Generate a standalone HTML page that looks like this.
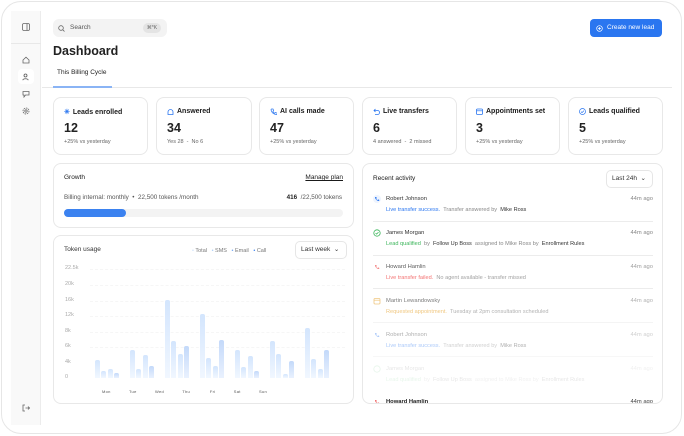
<!DOCTYPE html>
<html><head><meta charset="utf-8">
<style>
*{box-sizing:border-box;margin:0;padding:0}
body{width:684px;height:436px;background:#fff;font-family:"Liberation Sans",sans-serif;color:#1a1a1a;position:relative;overflow:hidden}
.a{position:absolute}
.frame{left:1px;top:1px;width:681px;height:433px;border:1px solid #e6e6e6;border-radius:20px;background:#fff}
.side{left:11px;top:11px;width:30px;height:414px;background:#f9f9f9;border-right:1px solid #ececec}
.card{position:absolute;border:1px solid #e8e8e8;border-radius:8px;background:#fff}
.stat .t{position:absolute;left:10px;top:10px;font-size:7px;font-weight:bold;display:flex;align-items:center;gap:3px}
.stat .v{position:absolute;left:10px;top:23px;font-size:12.5px;font-weight:bold;color:#222}
.stat .s{position:absolute;left:10px;top:41px;font-size:5.5px;color:#666}
.ic{width:7px;height:7px;display:inline-block}
.row{position:absolute;left:10px;width:280px;height:34px}
.row .n{position:absolute;left:13px;top:0;font-size:5.8px;color:#333}
.row .d{position:absolute;left:13px;top:11px;font-size:5.6px;color:#888;white-space:nowrap}
.row .d b{color:#333;font-weight:500}
.row .tm{position:absolute;right:0;top:0;font-size:5.8px;color:#888}
.row .i{position:absolute;left:0;top:-1px}
.sep{position:absolute;left:10px;width:280px;height:1px;background:#ececec}
.yl{position:absolute;left:11px;font-size:5.5px;color:#aaa}
.gl{position:absolute;left:36px;width:255px;border-top:1px dashed #f6f6f6}
.bar{position:absolute;width:5px;border-radius:2px 2px 0 0;background:linear-gradient(#d3e5fd,#f1f7ff)}
.bar.c{background:linear-gradient(#c3d9fa,#e9f1fe)}
</style></head><body>
<div class="a frame"></div>
<div class="a side">
  <svg class="a" style="left:11px;top:12px" width="8" height="8" viewBox="0 0 8 8"><rect x=".5" y=".5" width="7" height="7" rx="1.5" fill="none" stroke="#666" stroke-width=".8"/><line x1="5" y1=".5" x2="5" y2="7.5" stroke="#666" stroke-width=".8"/></svg>
  <div class="a" style="left:0;top:32px;width:30px;height:1px;background:#e8e8e8"></div>
  <svg class="a" style="left:11px;top:45px" width="8" height="8" viewBox="0 0 8 8"><path d="M1 4L4 1.2 7 4V7H1z" fill="none" stroke="#666" stroke-width=".8"/></svg>
  <div class="a" style="left:7px;top:58px;width:16px;height:15px;background:#fff;border-radius:4px"></div>
  <svg class="a" style="left:11px;top:62px" width="8" height="8" viewBox="0 0 8 8"><circle cx="3.5" cy="2.5" r="1.5" fill="none" stroke="#555" stroke-width=".8"/><path d="M.8 7.2C1 5.3 6 5.3 6.2 7.2" fill="none" stroke="#555" stroke-width=".8"/></svg>
  <svg class="a" style="left:11px;top:79px" width="8" height="8" viewBox="0 0 8 8"><path d="M1 1.5h6v3.5H3.5L2 7V5H1z" fill="none" stroke="#666" stroke-width=".8"/></svg>
  <svg class="a" style="left:11px;top:96px" width="8" height="8" viewBox="0 0 8 8"><circle cx="4" cy="4" r="1.2" fill="none" stroke="#666" stroke-width=".8"/><circle cx="4" cy="4" r="3" fill="none" stroke="#666" stroke-width=".8" stroke-dasharray="1.5 .8"/></svg>
  <svg class="a" style="left:11px;top:393px" width="8" height="8" viewBox="0 0 8 8"><path d="M3 1H1v6h2M3.5 4H7.5M6 2.5L7.5 4 6 5.5" fill="none" stroke="#666" stroke-width=".8"/></svg>
</div>

<div class="a" style="left:53px;top:19px;width:114px;height:18px;background:#f3f3f3;border-radius:6px"></div>
<svg class="a" style="left:58px;top:25px" width="7" height="7" viewBox="0 0 7 7"><circle cx="3" cy="3" r="2.3" fill="none" stroke="#666" stroke-width=".8"/><line x1="4.8" y1="4.8" x2="6.5" y2="6.5" stroke="#666" stroke-width=".8"/></svg>
<div class="a" style="left:70px;top:24px;font-size:6.5px;color:#555">Search</div>
<div class="a" style="left:143px;top:23px;width:18px;height:10px;background:#e4e4e4;border-radius:5px;font-size:5px;color:#666;text-align:center;line-height:10px">⌘*K</div>

<div class="a" style="left:590px;top:19px;width:72px;height:18px;background:#2a76f0;border-radius:4px"></div>
<svg class="a" style="left:596px;top:25px" width="7" height="7" viewBox="0 0 7 7"><circle cx="3.5" cy="3.5" r="2.8" fill="none" stroke="#fff" stroke-width=".7"/><path d="M3.5 2v3M2 3.5h3" stroke="#fff" stroke-width=".7"/></svg>
<div class="a" style="left:607px;top:24px;font-size:6.5px;color:#fff">Create new lead</div>

<div class="a" style="left:53px;top:44px;font-size:12.5px;font-weight:bold;color:#222">Dashboard</div>
<div class="a" style="left:57px;top:69px;font-size:6.5px;color:#222">This Billing Cycle</div>
<div class="a" style="left:42px;top:87px;width:630px;height:1px;background:#e8e8e8"></div>
<div class="a" style="left:53px;top:86px;width:59px;height:2px;background:#8ab4f5"></div>

<div class="card stat" style="left:53px;top:97px;width:95px;height:58px"><div class="t"><span style="color:#2a76f0">✳</span>Leads enrolled</div><div class="v">12</div><div class="s">+25% vs yesterday</div></div>
<div class="card stat" style="left:156px;top:97px;width:96px;height:58px"><div class="t"><svg class="ic" viewBox="0 0 7 7"><path d="M1 6.5V4A2.5 2.5 0 0 1 6 4v2.5z" fill="none" stroke="#2a76f0" stroke-width=".8"/></svg>Answered</div><div class="v">34</div><div class="s">Yes 28 &nbsp;- &nbsp;No 6</div></div>
<div class="card stat" style="left:259px;top:97px;width:95px;height:58px"><div class="t"><svg class="ic" viewBox="0 0 7 7"><path d="M1.5 1h1.5l.7 1.6-.9.7a4 4 0 0 0 2 2l.7-.9 1.5.7V6.5A5.5 5.5 0 0 1 1 1.5z" fill="none" stroke="#2a76f0" stroke-width=".7"/></svg>AI calls made</div><div class="v">47</div><div class="s">+25% vs yesterday</div></div>
<div class="card stat" style="left:362px;top:97px;width:95px;height:58px"><div class="t"><svg class="ic" viewBox="0 0 7 7"><path d="M2.5 1L1 2.5 2.5 4M1 2.5h3.5a2 2 0 0 1 0 4H2" fill="none" stroke="#2a76f0" stroke-width=".8"/></svg>Live transfers</div><div class="v">6</div><div class="s">4 answered &nbsp;- &nbsp;2 missed</div></div>
<div class="card stat" style="left:465px;top:97px;width:95px;height:58px"><div class="t"><svg class="ic" viewBox="0 0 7 7"><rect x=".5" y="1" width="6" height="5.5" rx="1" fill="none" stroke="#2a76f0" stroke-width=".8"/><line x1=".5" y1="2.8" x2="6.5" y2="2.8" stroke="#2a76f0" stroke-width=".7"/></svg>Appointments set</div><div class="v">3</div><div class="s">+25% vs yesterday</div></div>
<div class="card stat" style="left:568px;top:97px;width:95px;height:58px"><div class="t"><svg class="ic" viewBox="0 0 7 7"><circle cx="3.5" cy="3.5" r="3" fill="none" stroke="#2a76f0" stroke-width=".7"/><path d="M2 3.6l1 1 2-2" fill="none" stroke="#2a76f0" stroke-width=".7"/></svg>Leads qualified</div><div class="v">5</div><div class="s">+25% vs yesterday</div></div>

<div class="card" style="left:53px;top:163px;width:301px;height:65px">
  <div class="a" style="left:10px;top:10px;font-size:6.5px;font-weight:500">Growth</div>
  <div class="a" style="right:10px;top:10px;font-size:6.5px;text-decoration:underline">Manage plan</div>
  <div class="a" style="left:10px;top:30px;font-size:6.3px;color:#555">Billing internal: monthly &nbsp;• &nbsp;22,500 tokens /month</div>
  <div class="a" style="right:11px;top:30px;font-size:6.3px;color:#555"><b style="color:#222">416</b> &nbsp;/22,500 tokens</div>
  <div class="a" style="left:10px;top:45px;width:279px;height:8px;background:#f3f3f3;border-radius:4px"></div>
  <div class="a" style="left:10px;top:45px;width:62px;height:8px;background:#3b82f0;border-radius:4px"></div>
</div>

<div class="card" style="left:53px;top:235px;width:301px;height:169px;overflow:hidden">
  <div class="a" style="left:10px;top:10px;font-size:6.5px;color:#333">Token usage</div>
  <div class="a" style="left:138px;top:12px;font-size:5.5px;color:#777;white-space:nowrap"><span style="color:#cfe2fb">•</span> Total &nbsp; <span style="color:#a9cdf7">•</span> SMS &nbsp; <span style="color:#6fa5f2">•</span> Email &nbsp; <span style="color:#3b82f0">•</span> Call</div>
  <div class="a" style="left:241px;top:5px;width:52px;height:18px;border:1px solid #e6e6e6;border-radius:5px;font-size:6.5px;color:#333;line-height:16px;padding-left:5px">Last week &nbsp;⌄</div>
  <div class="yl" style="top:29px">22.5k</div><div class="gl" style="top:33px"></div>
  <div class="yl" style="top:45px">20k</div><div class="gl" style="top:49px"></div>
  <div class="yl" style="top:61px">16k</div><div class="gl" style="top:65px"></div>
  <div class="yl" style="top:76px">12k</div><div class="gl" style="top:80px"></div>
  <div class="yl" style="top:92px">8k</div><div class="gl" style="top:96px"></div>
  <div class="yl" style="top:107px">6k</div><div class="gl" style="top:111px"></div>
  <div class="yl" style="top:123px">4k</div>
  <div class="yl" style="top:138px">0</div>
  <div class="bar" style="left:41px;top:124px;height:18px"></div><div class="bar" style="left:47px;top:135px;height:7px"></div><div class="bar" style="left:54px;top:133px;height:9px"></div><div class="bar c" style="left:60px;top:137px;height:5px"></div>
  <div class="bar" style="left:76px;top:114px;height:28px"></div><div class="bar" style="left:82px;top:133px;height:9px"></div><div class="bar" style="left:89px;top:119px;height:23px"></div><div class="bar c" style="left:95px;top:130px;height:12px"></div>
  <div class="bar" style="left:111px;top:64px;height:78px"></div><div class="bar" style="left:117px;top:105px;height:37px"></div><div class="bar" style="left:124px;top:118px;height:24px"></div><div class="bar c" style="left:130px;top:110px;height:32px"></div>
  <div class="bar" style="left:146px;top:78px;height:64px"></div><div class="bar" style="left:152px;top:122px;height:20px"></div><div class="bar" style="left:159px;top:130px;height:12px"></div><div class="bar c" style="left:165px;top:104px;height:38px"></div>
  <div class="bar" style="left:181px;top:114px;height:28px"></div><div class="bar" style="left:187px;top:131px;height:11px"></div><div class="bar" style="left:194px;top:120px;height:22px"></div><div class="bar c" style="left:200px;top:135px;height:7px"></div>
  <div class="bar" style="left:216px;top:105px;height:37px"></div><div class="bar" style="left:222px;top:118px;height:24px"></div><div class="bar" style="left:229px;top:138px;height:4px"></div><div class="bar c" style="left:235px;top:125px;height:17px"></div>
  <div class="bar" style="left:251px;top:92px;height:50px"></div><div class="bar" style="left:257px;top:123px;height:19px"></div><div class="bar" style="left:264px;top:133px;height:9px"></div><div class="bar c" style="left:270px;top:114px;height:28px"></div>
  <div class="a" style="left:48px;top:153px;font-size:4px;color:#555;letter-spacing:.3px;white-space:nowrap">Mon &nbsp; &nbsp; &nbsp; &nbsp; &nbsp; &nbsp; Tue &nbsp; &nbsp; &nbsp; &nbsp; &nbsp; &nbsp; Wed &nbsp; &nbsp; &nbsp; &nbsp; &nbsp; &nbsp; Thu &nbsp; &nbsp; &nbsp; &nbsp; &nbsp; &nbsp; &nbsp;Fri &nbsp; &nbsp; &nbsp; &nbsp; &nbsp; &nbsp; Sat &nbsp; &nbsp; &nbsp; &nbsp; &nbsp; &nbsp; Sun</div>
</div>

<div class="card" style="left:362px;top:163px;width:301px;height:241px;overflow:hidden">
  <div class="a" style="left:10px;top:11px;font-size:6.5px;font-weight:500">Recent activity</div>
  <div class="a" style="left:243px;top:6px;width:47px;height:18px;border:1px solid #e6e6e6;border-radius:5px;font-size:6.5px;color:#333;line-height:16px;padding-left:5px">Last 24h &nbsp;⌄</div>

  <div class="row" style="top:32px"><svg class="i" width="8" height="8" viewBox="0 0 8 8"><circle cx="4" cy="4" r="4" fill="#eef4fe"/><path d="M2 2h1.3l.5 1.2-.7.5a3 3 0 0 0 1.4 1.4l.5-.7 1.2.5V6A4 4 0 0 1 2 2z" fill="#2a76f0"/></svg><div class="n">Robert Johnson</div><div class="tm">44m ago</div><div class="d"><span style="color:#2a76f0">Live transfer success.</span> &nbsp;Transfer answered by &nbsp;<b>Mike Ross</b></div></div>
  <div class="sep" style="top:57px"></div>
  <div class="row" style="top:66px"><svg class="i" width="8" height="8" viewBox="0 0 8 8"><circle cx="4" cy="4" r="3.2" fill="none" stroke="#3bb55a" stroke-width=".8"/><path d="M2.6 4.1l1 1 1.9-2" fill="none" stroke="#3bb55a" stroke-width=".8"/></svg><div class="n">James Morgan</div><div class="tm">44m ago</div><div class="d"><span style="color:#3bb55a">Lead qualified</span> &nbsp;by &nbsp;<b>Follow Up Boss</b> &nbsp;assigned to Mike Ross by &nbsp;<b>Enrollment Rules</b></div></div>
  <div class="sep" style="top:91px"></div>
  <div class="row" style="top:100px;opacity:.8"><svg class="i" width="8" height="8" viewBox="0 0 8 8"><path d="M2 2h1.3l.5 1.2-.7.5a3 3 0 0 0 1.4 1.4l.5-.7 1.2.5V6A4 4 0 0 1 2 2z" fill="#f06262"/></svg><div class="n">Howard Hamlin</div><div class="tm">44m ago</div><div class="d"><span style="color:#f05050">Live transfer failed.</span> &nbsp;No agent available - transfer missed</div></div>
  <div class="sep" style="top:124px"></div>
  <div class="row" style="top:134px;opacity:.65"><svg class="i" width="8" height="8" viewBox="0 0 8 8"><rect x="1" y="1.5" width="6" height="5.5" rx="1" fill="none" stroke="#e8a93b" stroke-width=".8"/><line x1="1" y1="3.2" x2="7" y2="3.2" stroke="#e8a93b" stroke-width=".7"/></svg><div class="n">Martin Lewandowsky</div><div class="tm">44m ago</div><div class="d"><span style="color:#e8a93b">Requested appointment.</span> &nbsp;Tuesday at 2pm consultation scheduled</div></div>
  <div class="sep" style="top:158px;opacity:.6"></div>
  <div class="row" style="top:168px;opacity:.4"><svg class="i" width="8" height="8" viewBox="0 0 8 8"><path d="M2 2h1.3l.5 1.2-.7.5a3 3 0 0 0 1.4 1.4l.5-.7 1.2.5V6A4 4 0 0 1 2 2z" fill="#2a76f0"/></svg><div class="n">Robert Johnson</div><div class="tm">44m ago</div><div class="d"><span style="color:#2a76f0">Live transfer success.</span> &nbsp;Transfer answered by &nbsp;<b>Mike Ross</b></div></div>
  <div class="sep" style="top:192px;opacity:.4"></div>
  <div class="row" style="top:202px;opacity:.12"><svg class="i" width="8" height="8" viewBox="0 0 8 8"><circle cx="4" cy="4" r="3.2" fill="none" stroke="#3bb55a" stroke-width=".8"/></svg><div class="n">James Morgan</div><div class="tm">44m ago</div><div class="d"><span style="color:#3bb55a">Lead qualified</span> &nbsp;by &nbsp;<b>Follow Up Boss</b> &nbsp;assigned to Mike Ross by &nbsp;<b>Enrollment Rules</b></div></div>
  <div class="row" style="top:235px"><svg class="i" width="8" height="8" viewBox="0 0 8 8"><path d="M2 2h1.3l.5 1.2-.7.5a3 3 0 0 0 1.4 1.4l.5-.7 1.2.5V6A4 4 0 0 1 2 2z" fill="#f06262"/></svg><div class="n" style="font-weight:bold;color:#222">Howard Hamlin</div><div class="tm" style="color:#444">44m ago</div></div>
</div>
</body></html>
